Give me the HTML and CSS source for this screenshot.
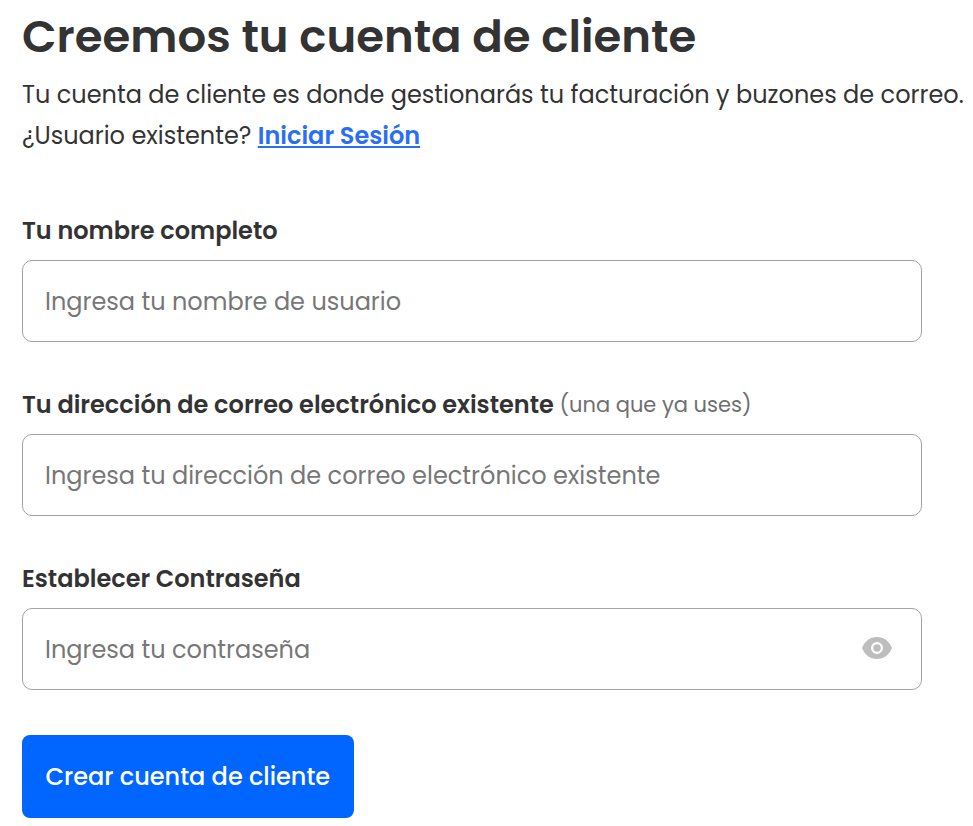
FILE: index.html
```html
<!DOCTYPE html>
<html lang="es">
<head>
    <meta charset="UTF-8">
    <title>Creemos tu cuenta de cliente</title>
    <link rel="stylesheet" href="styles.css">
</head>
<body>
    <div class="container">
        <h1>Creemos tu cuenta de cliente</h1>
        <p class="intro">Tu cuenta de cliente es donde gestionarás tu facturación y buzones de correo.</p>
        <p class="intro">¿Usuario existente? <a href="#" class="login-link">Iniciar Sesión</a></p>

        <form class="signup-form">
            <div class="field">
                <label for="name">Tu nombre completo</label>
                <div class="input-box">
                    <input id="name" type="text" placeholder="Ingresa tu nombre de usuario">
                </div>
            </div>
            <div class="field">
                <label for="email">Tu dirección de correo electrónico existente <span class="hint">(una que ya uses)</span></label>
                <div class="input-box">
                    <input id="email" type="text" placeholder="Ingresa tu dirección de correo electrónico existente">
                </div>
            </div>
            <div class="field">
                <label for="password">Establecer Contraseña</label>
                <div class="input-box">
                    <input id="password" type="password" placeholder="Ingresa tu contraseña">
                    <svg class="eye-icon" viewBox="0 0 30 22" width="30" height="22">
                        <path fill="#bdbdbd" fill-rule="evenodd" d="M15 0C8 0 2.500 4.500 0 11c2.500 6.500 8 11 15 11s12.500-4.500 15-11C27.500 4.500 22 0 15 0zM15 5a6 6 0 1 1 0 12a6 6 0 1 1 0-12zM15 7.300a3.700 3.700 0 1 0 0 7.400a3.700 3.700 0 1 0 0-7.400z"/>
                    </svg>
                </div>
            </div>
            <button type="button" class="submit-button">Crear cuenta de cliente</button>
        </form>
    </div>
</body>
</html>
```

FILE: styles.css
```css
body {
    background-color: #fff;
    color: #333;
    font-family: Poppins, "Open Sans", "Noto Sans", sans-serif;
    margin: 0;
    padding: 0;
}

.container {
    padding: 0 22px;
}

h1 {
    font-size: 45px;
    font-weight: 600;
    line-height: 74px;
    margin: 0;
}

.intro {
    font-size: 24px;
    line-height: 41px;
    margin: 0;
    white-space: nowrap;
}

.login-link {
    color: #2a6ef5;
    font-weight: 600;
}

.signup-form {
    margin-top: 58px;
    width: 900px;
}

.field {
    margin-bottom: 46px;
}

.field:last-of-type {
    margin-bottom: 45px;
}

label {
    display: block;
    font-size: 24px;
    font-weight: 600;
    line-height: 34px;
    margin-bottom: 12px;
}

.hint {
    color: #6f6f6f;
    font-weight: 400;
    font-size: 21px;
    line-height: 1;
    vertical-align: 1px;
}

.input-box {
    display: flex;
    align-items: center;
    height: 82px;
    box-sizing: border-box;
    border: 1px solid #a3a3a3;
    border-radius: 10px;
    padding: 0 22px;
}

.input-box input {
    flex: 1;
    border: none;
    outline: none;
    background: none;
    font-family: inherit;
    font-size: 24px;
    color: #333;
    padding: 0;
}

.input-box input::placeholder {
    color: #777;
}

.eye-icon {
    flex: none;
    margin: 0 7px 2px 0;
}

.submit-button {
    display: block;
    height: 83px;
    padding: 0 23.5px;
    background-color: #0066ff;
    color: #fff;
    border: none;
    border-radius: 8px;
    font-family: inherit;
    font-size: 24px;
    font-weight: 500;
}
```
